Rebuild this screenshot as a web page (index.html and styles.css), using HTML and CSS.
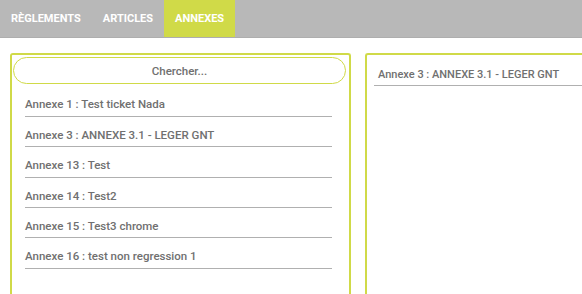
FILE: index.html
```html
<!DOCTYPE html>
<html lang="fr">
<head>
<meta charset="utf-8">
<title>Annexes</title>
<link rel="stylesheet" href="styles.css">
</head>
<body>
<nav class="tabs">
  <a class="tab">RÈGLEMENTS</a>
  <a class="tab">ARTICLES</a>
  <a class="tab active">ANNEXES</a>
</nav>
<main class="content">
  <section class="panel left">
    <div class="search">Chercher...</div>
    <ul class="list">
      <li class="item">Annexe 1 : Test ticket Nada</li>
      <li class="item">Annexe 3 : ANNEXE 3.1 - LEGER GNT</li>
      <li class="item">Annexe 13 : Test</li>
      <li class="item">Annexe 14 : Test2</li>
      <li class="item">Annexe 15 : Test3 chrome</li>
      <li class="item">Annexe 16 : test non regression 1</li>
    </ul>
  </section>
  <section class="panel right">
    <ul class="list selected">
      <li class="item">Annexe 3 : ANNEXE 3.1 - LEGER GNT</li>
    </ul>
  </section>
</main>
</body>
</html>
```
FILE: styles.css
```css
* { box-sizing: border-box; }
html, body { margin: 0; padding: 0; }
body {
  font-family: Roboto, "Liberation Sans", Arial, sans-serif;
  background: #fff;
  width: 582px;
  height: 294px;
  overflow: hidden;
}
.tabs {
  display: flex;
  height: 38px;
  background: #b8b8b8;
  border-bottom: 1px solid #aeaeae;
}
.tab {
  display: flex;
  align-items: center;
  padding: 0 11px;
  color: #fff;
  font-weight: 700;
  font-size: 11px;
}
.tab.active { background: #d0da48; }
.content {
  display: flex;
  gap: 14px;
  padding: 15px 0 0 10px;
  height: 256px;
}
.panel {
  height: 241px;
  border: 2px solid #d0da48;
  border-bottom: none;
  border-radius: 3px 3px 0 0;
}
.panel.left { flex: 0 0 341px; padding: 2px 3px 0 1px; }
.panel.right {
  flex: 1 1 auto;
  min-width: 0;
  border-right: none;
  border-radius: 3px 0 0 0;
  padding: 0 0 0 7px;
}
.search {
  height: 27px;
  border: 1.5px solid #d0da48;
  border-radius: 14px;
  display: flex;
  align-items: center;
  justify-content: center;
  color: #707070;
  font-size: 11.5px;
  font-weight: 500;
}
.list {
  list-style: none;
  margin: 0;
  padding: 0 14px 0 12px;
}
.left .list { padding-top: 2.5px; }
.item {
  height: 30.4px;
  display: flex;
  align-items: flex-end;
  padding-bottom: 4.5px;
  border-bottom: 1.5px solid #b0b0b0;
  color: #707070;
  font-size: 11.5px;
  font-weight: 500;
  white-space: nowrap;
}
.selected { padding: 1px 0 0 0; }
.selected .item {
  height: 30px;
  padding-left: 4px;
  padding-bottom: 4.5px;
  font-size: 11px;
}
```
